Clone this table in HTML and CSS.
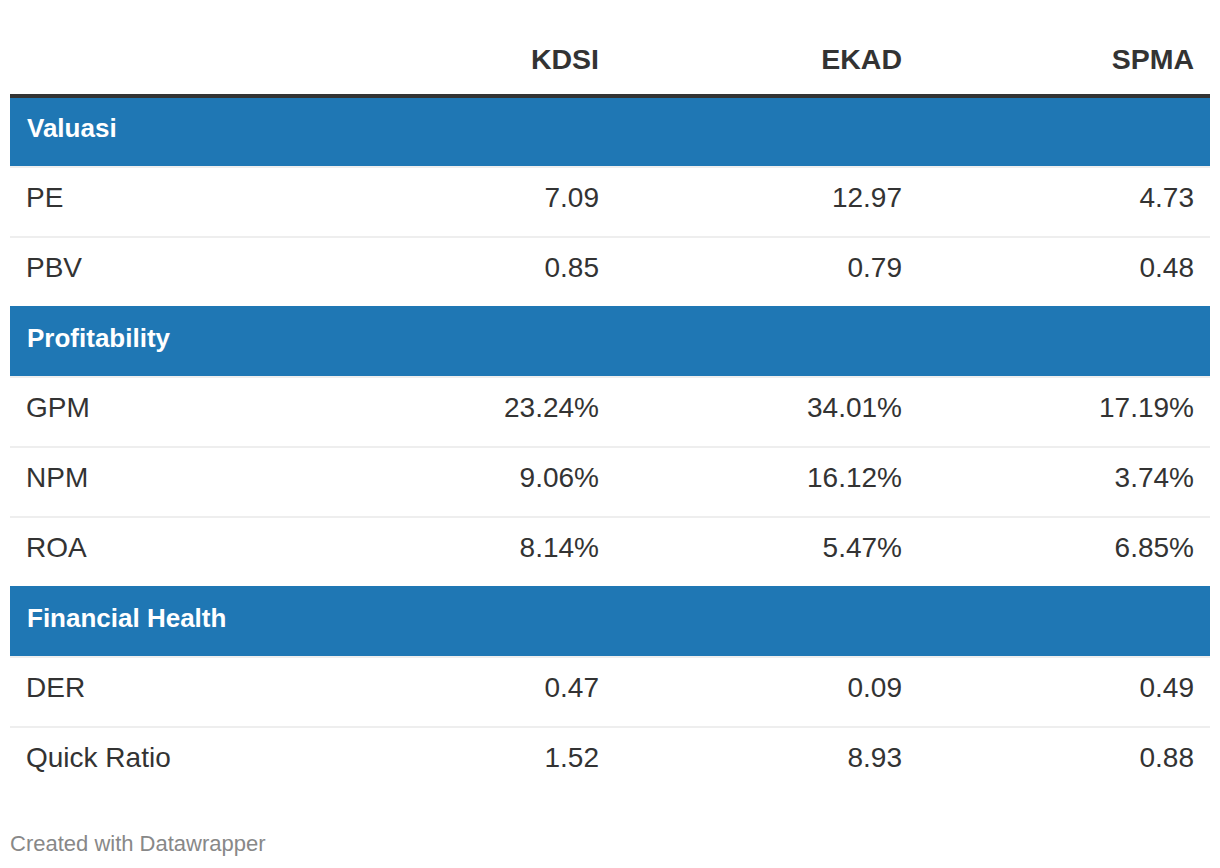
FILE: index.html
```html
<!DOCTYPE html>
<html lang="id">
<head>
<meta charset="utf-8">
<title>Perbandingan KDSI, EKAD, SPMA</title>
<link rel="stylesheet" href="styles.css">
</head>
<body>
<div class="chart">
  <div class="table">
    <div class="row head">
      <div class="cell"></div>
      <div class="cell num">KDSI</div>
      <div class="cell num">EKAD</div>
      <div class="cell num">SPMA</div>
    </div>
    <div class="section first">Valuasi</div>
    <div class="row">
      <div class="cell">PE</div><div class="cell num">7.09</div><div class="cell num">12.97</div><div class="cell num">4.73</div>
    </div>
    <div class="row">
      <div class="cell">PBV</div><div class="cell num">0.85</div><div class="cell num">0.79</div><div class="cell num">0.48</div>
    </div>
    <div class="section">Profitability</div>
    <div class="row">
      <div class="cell">GPM</div><div class="cell num">23.24%</div><div class="cell num">34.01%</div><div class="cell num">17.19%</div>
    </div>
    <div class="row">
      <div class="cell">NPM</div><div class="cell num">9.06%</div><div class="cell num">16.12%</div><div class="cell num">3.74%</div>
    </div>
    <div class="row">
      <div class="cell">ROA</div><div class="cell num">8.14%</div><div class="cell num">5.47%</div><div class="cell num">6.85%</div>
    </div>
    <div class="section">Financial Health</div>
    <div class="row">
      <div class="cell">DER</div><div class="cell num">0.47</div><div class="cell num">0.09</div><div class="cell num">0.49</div>
    </div>
    <div class="row">
      <div class="cell">Quick Ratio</div><div class="cell num">1.52</div><div class="cell num">8.93</div><div class="cell num">0.88</div>
    </div>
  </div>
  <div class="footer">Created with Datawrapper</div>
</div>
</body>
</html>
```

FILE: styles.css
```css
html, body {
  margin: 0;
  padding: 0;
  background: #ffffff;
}

body {
  font-family: "Liberation Sans", Arial, Helvetica, sans-serif;
  color: #333333;
}

.chart {
  padding: 0 10px;
}

.table {
  width: 1200px;
}

.row {
  display: grid;
  grid-template-columns: 305px 300px 303px 292px;
  box-sizing: border-box;
  height: 70px;
  border-top: 2px solid #eeeeee;
}

.cell {
  font-size: 28px;
  line-height: 32px;
  padding: 14px 16px 22px 16px;
  white-space: nowrap;
}

.num {
  text-align: right;
}

.row.head {
  height: 98px;
  border-top: 0;
  border-bottom: 4px solid #333333;
  align-items: end;
}

.row.head .cell {
  font-weight: bold;
  font-size: 28.5px;
  padding-top: 0;
  padding-bottom: 19px;
}

.section {
  box-sizing: border-box;
  height: 70px;
  border-top: 2px solid #1f77b4;
  background: #1f77b4;
  color: #ffffff;
  font-weight: bold;
  font-size: 26px;
  line-height: 32px;
  padding: 14px 16px 22px 17px;
}

.section.first {
  height: 68px;
  border-top: 0;
}

.footer {
  margin-top: 35px;
  font-size: 22px;
  line-height: 26px;
  color: #888888;
}
```
